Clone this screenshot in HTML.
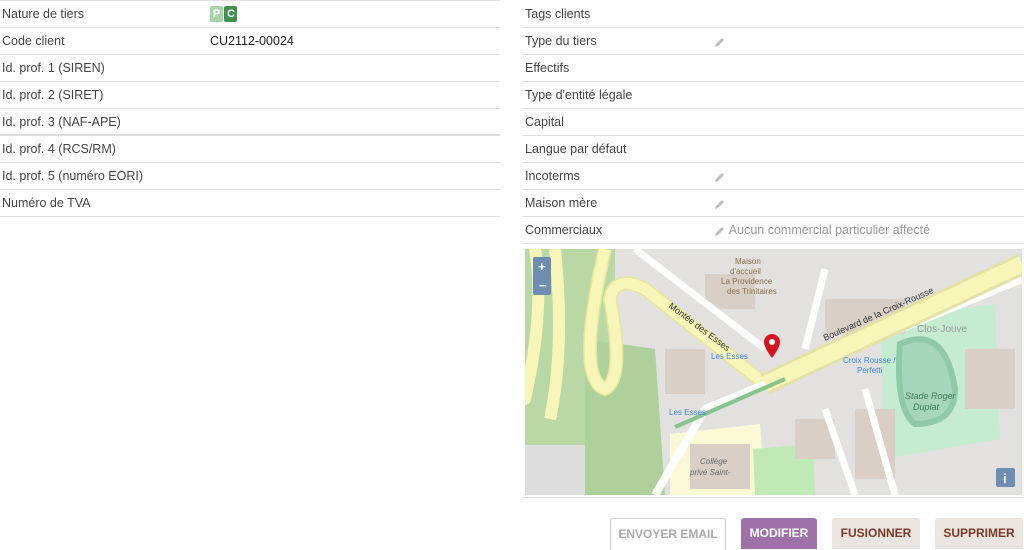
<!DOCTYPE html>
<html><head><meta charset="utf-8"><style>
body{margin:0;width:1024px;height:549px;background:#fff;font-family:"Liberation Sans",sans-serif;font-size:12.5px;color:#444;position:relative;overflow:hidden}
.col{position:absolute;top:0}
.row{height:26px;border-bottom:1px solid #e0e0e0;position:relative;line-height:26px}
.row .l{position:absolute;left:2px}
.row .v{position:absolute;left:210px;color:#222}
.r .row .v{left:192px;color:#999}
.pen{display:inline-block;width:12px;height:12px;vertical-align:middle}
.tag{display:inline-block;width:13px;height:16px;line-height:16px;text-align:center;color:#fff;font-weight:bold;font-size:11px;border-radius:2px;vertical-align:middle}
.btn{position:absolute;top:518px;height:31px;line-height:31px;text-align:center;font-weight:bold;font-size:12px;border-radius:3px 3px 0 0}
</style></head><body>
<div class="col" style="left:0;width:500px;border-top:1px solid #e0e0e0">
<div class="row"><span class="l">Nature de tiers</span><span class="v" style="top:-1px"><span class="tag" style="background:#a8d5a8">P</span> <span class="tag" style="background:#3f8f4f;margin-left:-2px">C</span></span></div>
<div class="row"><span class="l">Code client</span><span class="v">CU2112-00024</span></div>
<div class="row"><span class="l">Id. prof. 1 (SIREN)</span></div>
<div class="row"><span class="l">Id. prof. 2 (SIRET)</span></div>
<div class="row" style="border-bottom:2px solid #ddd;height:25px"><span class="l">Id. prof. 3 (NAF-APE)</span></div>
<div class="row"><span class="l">Id. prof. 4 (RCS/RM)</span></div>
<div class="row"><span class="l">Id. prof. 5 (numéro EORI)</span></div>
<div class="row"><span class="l">Numéro de TVA</span></div>
</div>
<div class="col r" style="left:522px;width:502px;top:1px">
<div class="row"><span class="l" style="left:3px">Tags clients</span></div>
<div class="row"><span class="l" style="left:3px">Type du tiers</span><span class="v"><svg class="pen" viewBox="0 0 12 12"><path d="M1 11l1-3 6-6 2 2-6 6z" fill="#bbb"/></svg></span></div>
<div class="row"><span class="l" style="left:3px">Effectifs</span></div>
<div class="row"><span class="l" style="left:3px">Type d'entité légale</span></div>
<div class="row"><span class="l" style="left:3px">Capital</span></div>
<div class="row"><span class="l" style="left:3px">Langue par défaut</span></div>
<div class="row"><span class="l" style="left:3px">Incoterms</span><span class="v"><svg class="pen" viewBox="0 0 12 12"><path d="M1 11l1-3 6-6 2 2-6 6z" fill="#bbb"/></svg></span></div>
<div class="row"><span class="l" style="left:3px">Maison mère</span><span class="v"><svg class="pen" viewBox="0 0 12 12"><path d="M1 11l1-3 6-6 2 2-6 6z" fill="#bbb"/></svg></span></div>
<div class="row"><span class="l" style="left:3px">Commerciaux</span><span class="v"><svg class="pen" viewBox="0 0 12 12"><path d="M1 11l1-3 6-6 2 2-6 6z" fill="#bbb"/></svg> Aucun commercial particulier affecté</span></div>
</div>
<svg style="position:absolute;left:525px;top:249px" width="497" height="246" viewBox="0 0 497 246" font-family="Liberation Sans" font-size="8">
<rect width="497" height="246" fill="#e3e1df"/>
<path d="M0 0H90V246H0Z" fill="#b9d8a6"/>
<path d="M60 90L130 100L140 246H60Z" fill="#aed09a"/>
<path d="M0 196H60V246H0Z" fill="#ddd"/>
<path d="M355 70L470 55L475 190L360 210Z" fill="#c5ebd0"/>
<path d="M375 95Q420 75 430 140Q430 175 390 175Q370 160 375 95Z" fill="#a6d7bc" stroke="#8fc9aa" stroke-width="6"/>
<path d="M145 185L235 175L240 246H145Z" fill="#fbf8d6"/>
<path d="M228 200L288 195L290 246H230Z" fill="#bfeab5"/>
<g fill="#d9cfc6"><rect x="140" y="100" width="40" height="45"/><rect x="300" y="50" width="80" height="35"/><rect x="330" y="160" width="40" height="70"/><rect x="180" y="25" width="50" height="35"/><rect x="440" y="100" width="50" height="60"/><rect x="165" y="195" width="60" height="45"/><rect x="270" y="170" width="40" height="40"/></g>
<path d="M0 150Q20 60 10 0" stroke="#f7f6b8" stroke-width="12" fill="none" stroke-linecap="round"/>
<path d="M25 170Q40 100 30 0" stroke="#f7f6b8" stroke-width="12" fill="none"/>
<path d="M300 20L280 100M340 140L370 246M300 160L330 246M110 0L240 100" stroke="#fff" stroke-width="7" fill="none"/>
<path d="M80 0Q50 130 80 140Q100 130 85 50Q90 25 120 40L240 135" stroke="#e7e49c" stroke-width="14" fill="none"/>
<path d="M80 0Q50 130 80 140Q100 130 85 50Q90 25 120 40L240 135" stroke="#f7f6b8" stroke-width="11" fill="none"/>
<path d="M130 246L180 160L497 30" stroke="#fff" stroke-width="8" fill="none"/>
<path d="M240 135L497 15" stroke="#e4e1a8" stroke-width="22" fill="none"/>
<path d="M240 135L497 15" stroke="#f7f6b8" stroke-width="16" fill="none"/>
<path d="M150 178L260 130" stroke="#86c48b" stroke-width="4"/>
<path d="M239 93a8 8 0 1 1 16 0c0 6-8 16-8 16s-8-10-8-16z" fill="#d7141e"/><circle cx="247" cy="93" r="3" fill="#fff"/>
<text x="186" y="110" fill="#3b86e8">Les Esses</text><text x="144" y="166" fill="#3b86e8">Les Esses</text>
<text x="318" y="114" fill="#3b86e8">Croix Rousse /</text><text x="332" y="124" fill="#3b86e8">Perfetti</text>
<text x="380" y="150" fill="#3e7a5a" font-style="italic" font-size="9">Stade Roger</text><text x="388" y="161" fill="#3e7a5a" font-style="italic" font-size="9">Duplat</text>
<text x="210" y="15" fill="#8a6b46">Maison</text><text x="205" y="25" fill="#8a6b46">d'accueil</text><text x="196" y="35" fill="#8a6b46">La Providence</text><text x="202" y="45" fill="#8a6b46">des Trinitaires</text>
<text x="392" y="83" fill="#999" font-size="10">Clos-Jouve</text>
<text x="175" y="215" fill="#666" font-style="italic">Collège</text><text x="165" y="226" fill="#666" font-style="italic">privé Saint-</text>
<text x="0" y="0" transform="translate(300 92) rotate(-24)" fill="#333" font-size="9">Boulevard de la Croix-Rousse</text>
<text x="0" y="0" transform="translate(143 58) rotate(37)" fill="#333" font-size="9">Montée des Esses</text>
<rect x="8" y="8" width="18" height="38" rx="2" fill="#6d8db3"/><text x="13" y="22" fill="#fff" font-size="13" font-weight="bold">+</text><text x="14" y="41" fill="#fff" font-size="13" font-weight="bold">−</text>
<rect x="471" y="219" width="19" height="19" rx="2" fill="#6d8db3"/><text x="478" y="234" fill="#fff" font-size="13" font-weight="bold">i</text>
</svg>
<div style="position:absolute;left:522px;top:497px;width:502px;border-top:1px solid #e0e0e0"></div>
<div class="btn" style="left:610px;width:114px;border:1px solid #ccc;border-bottom:none;color:#aaa;background:#fff">ENVOYER EMAIL</div>
<div class="btn" style="left:741px;width:76px;background:#9e72a9;color:#fff">MODIFIER</div>
<div class="btn" style="left:832px;width:88px;background:#ebe5e2;color:#7a3a2a">FUSIONNER</div>
<div class="btn" style="left:935px;width:88px;background:#ebe5e2;color:#7a3a2a">SUPPRIMER</div>
</body></html>
